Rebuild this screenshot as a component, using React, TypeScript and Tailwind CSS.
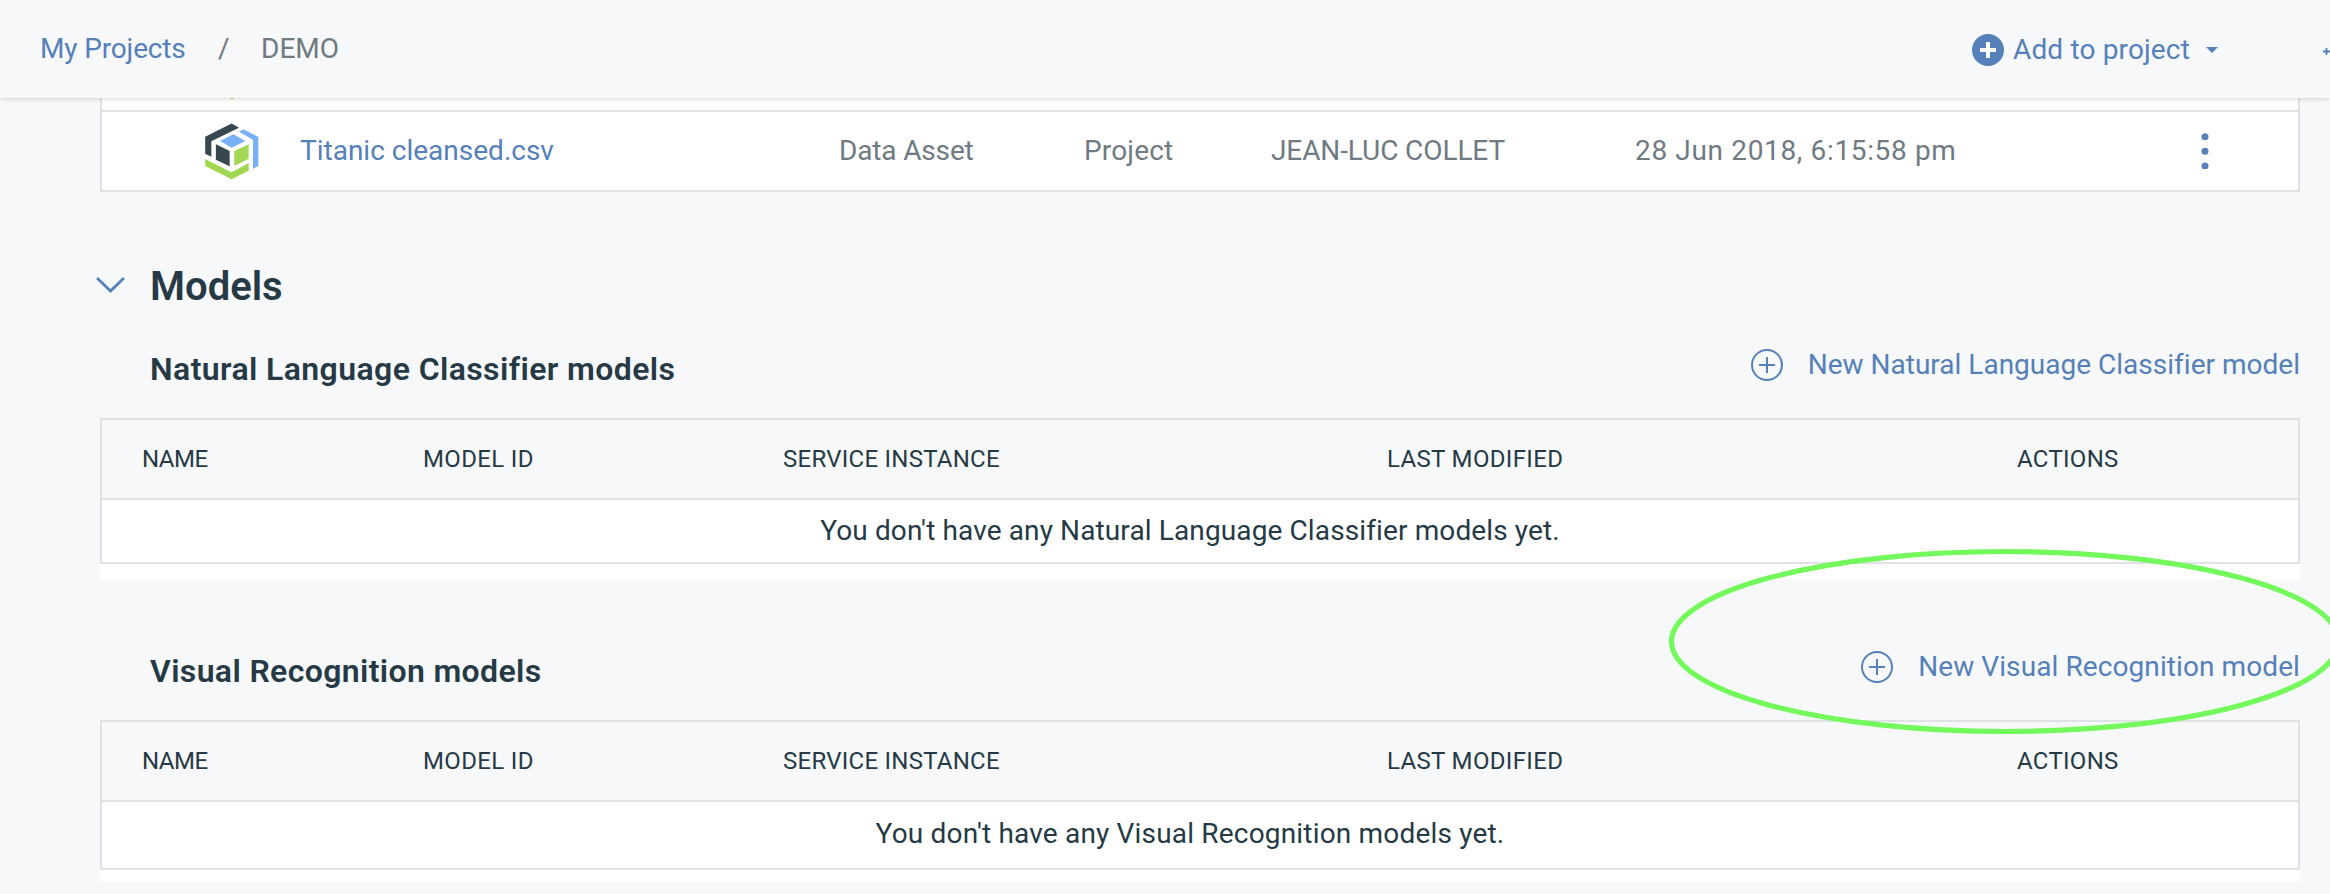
function AssetIcon() {
  return (
    <svg className="h-[57px] w-[54px] shrink-0" viewBox="76 98 162 171" aria-hidden="true">
      <g fill="#36474f">
        <path d="M76.5 139 155.7 99.5 178 112 95 153V199L76.5 190Z" />
        <path d="M108.6 162 150 182V228L108.6 208Z" />
      </g>
      <g fill="#79b1f6">
        <path d="M177.5 124 191.3 116.5 236 140V227L220 235V148Z" />
        <path d="M121 152 161 131.5 197 152 156 172Z" />
      </g>
      <g fill="#a2d753">
        <path d="M163.7 182 207 162V205L163.7 227Z" />
        <path d="M76.5 206 155.7 246 207 218V241L155.7 267 76.5 227Z" />
      </g>
    </svg>
  );
}

function PlusCircle() {
  return (
    <svg className="size-8 shrink-0" viewBox="0 0 32 32" fill="none" stroke="#5580b9" strokeWidth="2" aria-hidden="true">
      <circle cx="16" cy="16" r="15" />
      <path d="M16 8V24M8 16H24" />
    </svg>
  );
}

type ModelTableProps = {
  title: string;
  titleClass: string;
  action: string;
  actionClass: string;
  empty: string;
  emptyClass: string;
  tailClass: string;
};

function ModelTable({ title, titleClass, action, actionClass, empty, emptyClass, tailClass }: ModelTableProps) {
  return (
    <section>
      <div className="flex h-[102px] items-center justify-between pl-[50px]">
        <h3 className={`pt-1 text-[32px] leading-10 font-semibold ${titleClass}`}>{title}</h3>
        <a className="flex items-center gap-[25px] pb-1 text-[#5580b9]">
          <PlusCircle />
          <span className={actionClass}>{action}</span>
        </a>
      </div>
      <div className="bg-white">
        <div className="border-2 border-[#dfe3e6]">
          <div className="flex h-20 items-center border-b-2 border-[#dfe3e6] bg-[#f7f8fa] pl-10 text-2xl">
            <span className="w-[281px] tracking-[-0.5px]">NAME</span>
            <span className="w-[360px] tracking-[0.35px]">MODEL ID</span>
            <span className="w-[604px] tracking-[0.25px]">SERVICE INSTANCE</span>
            <span className="w-[630px] tracking-[0.35px]">LAST MODIFIED</span>
            <span className="tracking-[0.3px]">ACTIONS</span>
          </div>
          <div className={`flex items-center justify-center pr-5 ${emptyClass}`}>{empty}</div>
        </div>
        <div className={tailClass} />
      </div>
    </section>
  );
}

export default function App() {
  return (
    <div className="relative h-[894px] w-full overflow-hidden bg-[#f7f8fa] font-['Roboto',sans-serif] text-[28px] leading-9 whitespace-nowrap text-[#263a46]">
      <header className="relative z-10 flex h-[98px] items-center justify-between bg-[#f7f8fa] pl-10 shadow-[0_1px_5px_rgba(0,0,0,0.16)]">
        <nav className="flex items-center pb-px">
          <a className="w-[178px] tracking-[-0.15px] text-[#5580b9]">My Projects</a>
          <span className="w-[43px] text-[#6f7a82]">/</span>
          <span className="text-[#6f7a82]">DEMO</span>
        </nav>
        <div className="flex items-center pt-0.5 text-[#5580b9]">
          <svg className="mr-[9px] size-8" viewBox="0 0 32 32" aria-hidden="true">
            <circle cx="16" cy="16" r="16" fill="#5580b9" />
            <path d="M16 8V24M8 16H24" stroke="#fff" strokeWidth="4" />
          </svg>
          <span className="w-[193px] tracking-[0.15px]">Add to project</span>
          <svg className="mr-[105px] h-1.5 w-3" viewBox="0 0 12 6" fill="#5580b9" aria-hidden="true">
            <path d="M0 0H12L6 6Z" />
          </svg>
          <svg className="mt-0.5 h-[7px] w-[7px]" viewBox="0 0 7 7" stroke="#5580b9" strokeWidth="1.8" aria-hidden="true">
            <path d="M3.5 0V7M0 3.5H7" />
          </svg>
        </div>
      </header>

      <main className="ml-[100px] w-[2200px]">
        <div className="border-x-2 border-[#dfe3e6] bg-white">
          <div className="flex h-3 items-start pl-[128px]">
            <svg className="h-0.5 w-1" viewBox="0 0 4 2" fill="#a2d753" aria-hidden="true">
              <path d="M0 0H4L2 1.5Z" />
            </svg>
          </div>
          <div className="flex h-[82px] items-center border-y-2 border-[#dfe3e6] pl-[103px] text-[#6f7a82]">
            <AssetIcon />
            <a className="ml-[41px] w-[539px] text-[#5580b9]">Titanic cleansed.csv</a>
            <span className="w-[245px] tracking-[-0.15px]">Data Asset</span>
            <span className="w-[187px] tracking-[0.15px]">Project</span>
            <span className="w-[364px] tracking-[-0.1px]">JEAN-LUC COLLET</span>
            <span className="w-[566px] tracking-[0.65px]">28 Jun 2018, 6:15:58 pm</span>
            <svg className="h-9 w-2" viewBox="0 0 8 36" fill="#5580b9" aria-hidden="true">
              <circle cx="4" cy="3.7" r="3.5" />
              <circle cx="4" cy="18.3" r="3.5" />
              <circle cx="4" cy="33" r="3.5" />
            </svg>
          </div>
        </div>

        <div className="-ml-1 mt-16 flex h-[60px] items-center">
          <svg className="-mt-0.5 h-4 w-[29px]" viewBox="0 0 29 16" fill="none" stroke="#5580b9" strokeWidth="2.8" aria-hidden="true">
            <path d="M1 1 14.5 14 28 1" />
          </svg>
          <h2 className="ml-[25px] pt-px text-[40px] leading-[48px] font-semibold">Models</h2>
        </div>

        <ModelTable
          title="Natural Language Classifier models"
          titleClass="tracking-[0.4px]"
          action="New Natural Language Classifier model"
          actionClass="tracking-[0.01px]"
          empty="You don't have any Natural Language Classifier models yet."
          emptyClass="h-[62px] tracking-[0.12px]"
          tailClass="h-4"
        />
        <div className="h-[38px]" />
        <ModelTable
          title="Visual Recognition models"
          titleClass="tracking-[0.36px]"
          action="New Visual Recognition model"
          actionClass="tracking-[0.09px]"
          empty="You don't have any Visual Recognition models yet."
          emptyClass="h-[66px] pb-0.5 tracking-[0.18px]"
          tailClass="h-3"
        />
      </main>

      <svg className="pointer-events-none absolute top-[540px] left-[1660px] z-20 h-[200px] w-[670px]" viewBox="0 0 670 200" fill="none" aria-hidden="true">
        <ellipse cx="345" cy="101.5" rx="333.5" ry="90" stroke="#73f95b" strokeWidth="5.2" />
      </svg>
    </div>
  );
}
